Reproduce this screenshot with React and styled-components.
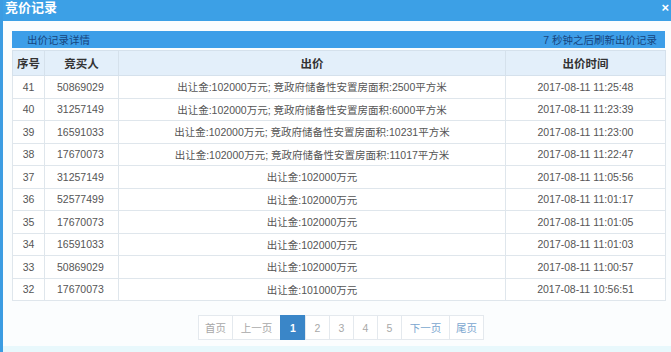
import styled, { createGlobalStyle } from "styled-components";

const GlobalStyle = createGlobalStyle`
  html, body {
    margin: 0;
    padding: 0;
    overflow: hidden;
  }
  body {
    font-family: "Liberation Sans", "Noto Sans CJK SC", sans-serif;
  }
`;

const rows = [
  ["41", "50869029", "出让金:102000万元; 竞政府储备性安置房面积:2500平方米", "2017-08-11 11:25:48"],
  ["40", "31257149", "出让金:102000万元; 竞政府储备性安置房面积:6000平方米", "2017-08-11 11:23:39"],
  ["39", "16591033", "出让金:102000万元; 竞政府储备性安置房面积:10231平方米", "2017-08-11 11:23:00"],
  ["38", "17670073", "出让金:102000万元; 竞政府储备性安置房面积:11017平方米", "2017-08-11 11:22:47"],
  ["37", "31257149", "出让金:102000万元", "2017-08-11 11:05:56"],
  ["36", "52577499", "出让金:102000万元", "2017-08-11 11:01:17"],
  ["35", "17670073", "出让金:102000万元", "2017-08-11 11:01:05"],
  ["34", "16591033", "出让金:102000万元", "2017-08-11 11:01:03"],
  ["33", "50869029", "出让金:102000万元", "2017-08-11 11:00:57"],
  ["32", "17670073", "出让金:101000万元", "2017-08-11 10:56:51"],
];

const pages = [
  { label: "首页", width: 35 },
  { label: "上一页", width: 49 },
  { label: "1", width: 26, active: true },
  { label: "2", width: 25 },
  { label: "3", width: 25 },
  { label: "4", width: 25 },
  { label: "5", width: 25 },
  { label: "下一页", width: 49, link: true },
  { label: "尾页", width: 35, link: true },
];

function App() {
  return (
    <Window>
      <GlobalStyle />
      <TitleBar>
        <Title>竞价记录</Title>
        <Close>×</Close>
      </TitleBar>
      <Body>
        <SubBar>
          <span>出价记录详情</span>
          <span>7 秒钟之后刷新出价记录</span>
        </SubBar>
        <Table>
          <colgroup>
            <col style={{ width: 32 }} />
            <col style={{ width: 74 }} />
            <col style={{ width: 387 }} />
            <col style={{ width: 160 }} />
          </colgroup>
          <thead>
            <tr>
              <Th>序号</Th>
              <Th>竞买人</Th>
              <Th>出价</Th>
              <Th>出价时间</Th>
            </tr>
          </thead>
          <tbody>
            {rows.map((r) => (
              <tr key={r[0]}>
                <Td>{r[0]}</Td>
                <Td $left>{r[1]}</Td>
                <Td>{r[2]}</Td>
                <Td>{r[3]}</Td>
              </tr>
            ))}
          </tbody>
        </Table>
        <Pager>
          {pages.map((p) => (
            <PageBtn key={p.label} $w={p.width} $active={p.active} $link={p.link}>
              {p.label}
            </PageBtn>
          ))}
        </Pager>
      </Body>
      <BottomStrip />
    </Window>
  );
}

export default App;

const Window = styled.div`
  width: 671px;
  height: 352px;
  box-sizing: border-box;
  border-left: 3px solid #3b9ce2;
  background: #f8fbfd;
  display: flex;
  flex-direction: column;
  overflow: hidden;
`;

const TitleBar = styled.div`
  height: 21px;
  background: #3ca0e6;
  display: flex;
  align-items: flex-start;
  justify-content: space-between;
  padding-left: 2px;
  flex-shrink: 0;
`;

const Title = styled.div`
  color: #ffffff;
  font-weight: 700;
  font-size: 13px;
  line-height: 15px;
`;

const Close = styled.div`
  color: #ffffff;
  font-size: 13px;
  font-weight: 700;
  line-height: 16px;
  margin-right: 2px;
`;

const Body = styled.div`
  flex: 1;
  padding: 10px 6px 0 9px;
  background: #fbfdfe;
`;

const SubBar = styled.div`
  height: 17px;
  background: #3d9ee8;
  display: flex;
  justify-content: space-between;
  align-items: center;
  padding: 0 8px 0 15px;
  font-size: 10.5px;
  color: #17457e;
  margin-bottom: 2px;
`;

const Table = styled.table`
  width: 653px;
  border-collapse: collapse;
  table-layout: fixed;
  background: #ffffff;
`;

const Th = styled.th`
  height: 24px;
  padding: 0;
  background: #e3effa;
  border: 1px solid #d5e1ec;
  font-size: 11.5px;
  font-weight: 700;
  color: #333333;
  text-align: center;
`;

const Td = styled.td`
  height: 21.5px;
  padding: ${(p) => (p.$left ? "0 0 0 12px" : "0")};
  border: 1px solid #dfe6ec;
  font-size: 10.5px;
  color: #555555;
  text-align: ${(p) => (p.$left ? "left" : "center")};
  white-space: nowrap;
`;

const Pager = styled.div`
  display: flex;
  justify-content: center;
  margin-top: 14px;
  padding-left: 6px;
`;

const PageBtn = styled.div`
  width: ${(p) => p.$w}px;
  height: 25px;
  box-sizing: border-box;
  display: flex;
  align-items: center;
  justify-content: center;
  font-size: 10.5px;
  border: 1px solid ${(p) => (p.$active ? "#3a86c8" : "#e4e9ee")};
  margin-left: -1px;
  background: ${(p) => (p.$active ? "#3a86c8" : "#ffffff")};
  color: ${(p) => (p.$active ? "#ffffff" : p.$link ? "#7aa6cf" : "#a8a8a8")};
  font-weight: ${(p) => (p.$active ? 700 : 400)};
`;

const BottomStrip = styled.div`
  height: 6px;
  background: #e8f8fc;
  flex-shrink: 0;
`;
